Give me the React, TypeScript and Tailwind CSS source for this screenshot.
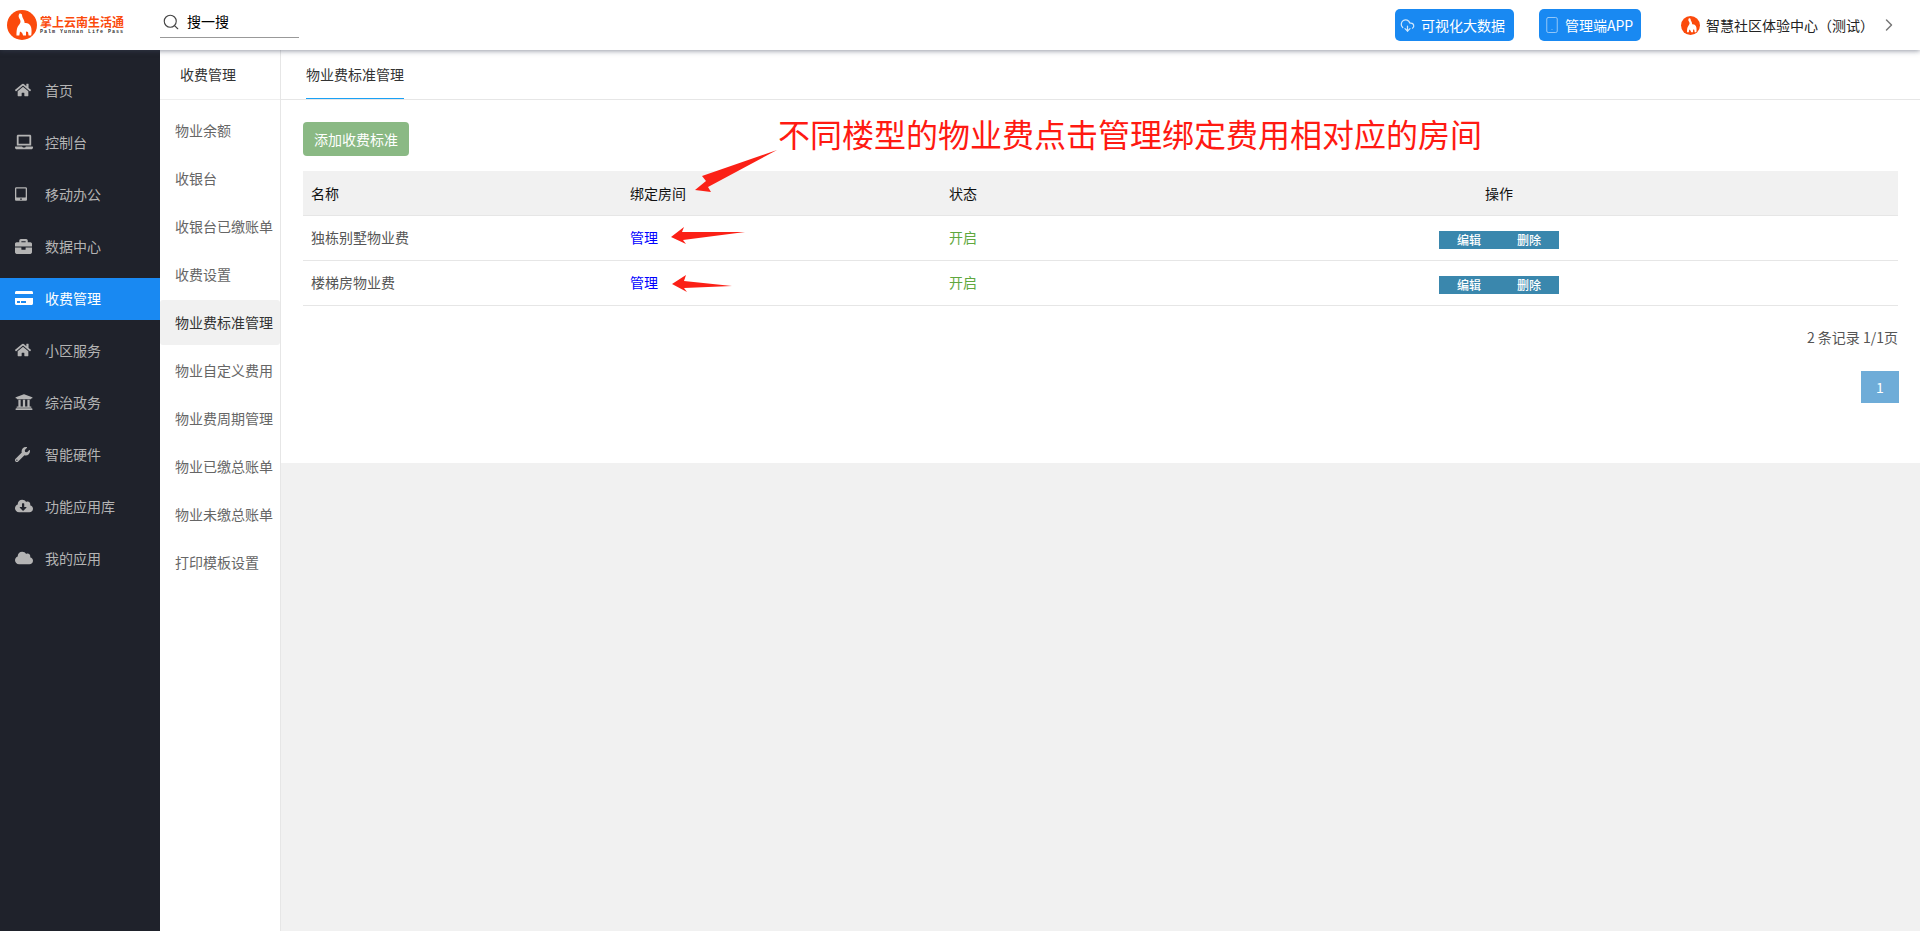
import { ReactNode } from "react"

import {
  FaBriefcase,
  FaCloud,
  FaCloudDownloadAlt,
  FaCreditCard,
  FaHome,
  FaLaptop,
  FaTabletAlt,
  FaUniversity,
  FaWrench,
} from "react-icons/fa"
import { LuChevronRight, LuCloudDownload, LuSearch, LuSmartphone } from "react-icons/lu"

const navItems: { label: string; icon: ReactNode; active?: boolean }[] = [
  { label: "首页", icon: <FaHome className="w-[16px] h-[16px]" /> },
  { label: "控制台", icon: <FaLaptop className="w-[18px] h-[18px]" /> },
  { label: "移动办公", icon: <FaTabletAlt className="w-[12px] h-[14px]" /> },
  { label: "数据中心", icon: <FaBriefcase className="w-[17px] h-[17px]" /> },
  { label: "收费管理", icon: <FaCreditCard className="w-[18px] h-[18px]" />, active: true },
  { label: "小区服务", icon: <FaHome className="w-[16px] h-[16px]" /> },
  { label: "综治政务", icon: <FaUniversity className="w-[18px] h-[18px]" /> },
  { label: "智能硬件", icon: <FaWrench className="w-[15px] h-[15px]" /> },
  { label: "功能应用库", icon: <FaCloudDownloadAlt className="w-[18px] h-[18px]" /> },
  { label: "我的应用", icon: <FaCloud className="w-[18px] h-[18px]" /> },
]

const subItems = [
  "物业余额",
  "收银台",
  "收银台已缴账单",
  "收费设置",
  "物业费标准管理",
  "物业自定义费用",
  "物业费周期管理",
  "物业已缴总账单",
  "物业未缴总账单",
  "打印模板设置",
]

const rows = ["独栋别墅物业费", "楼梯房物业费"]

const columns = "grid grid-cols-[319px_319px_319px_478px_1fr] items-center"

function Elephant({ className }: { className: string }) {
  return (
    <svg viewBox="0 0 30 30" className={className}>
      <circle cx="15" cy="15" r="15" fill="#fb4a0c" />
      <path
        d="M12.5 3.5C11 5.5 11.5 7.5 13 9.5c1 2 .5 3.5-1 5.5-2 2.2-2.5 5-2.5 10.5h2.8l.7-4 2 1.2 1.2 2.8h2.8v-4l2 .4.6 3.6h2.6c.6-3.5.6-7-.6-9.5-1.2-2.4-3.4-3.5-6-3 .3-3-2.6-5-2.6-8.5-.4-.4-1-.8-1.5-1z"
        fill="#fff"
      />
    </svg>
  )
}

function Header() {
  return (
    <header className="relative z-10 h-[50px] shrink-0 bg-white flex items-center shadow-[0_1px_5px_rgba(60,70,90,0.55)]">
      <div className="w-[160px] shrink-0 pl-[7px] flex items-center">
        <Elephant className="w-[30px] h-[30px] shrink-0" />
        <div className="ml-[3px] flex flex-col">
          <span className="text-[12px] leading-[14px] font-bold text-[#fb4a0c] whitespace-nowrap">掌上云南生活通</span>
          <span className="text-[5px] leading-[6px] tracking-[1px] text-[#333] whitespace-nowrap font-bold font-['Liberation_Mono',monospace]">
            Palm Yunnan Life Pass
          </span>
        </div>
      </div>
      <div className="self-start w-[139px] h-[38px] pt-[6px] border-b border-[#999] flex items-center">
        <LuSearch className="w-[18px] h-[18px] ml-[2px] text-[#444]" strokeWidth={1.5} />
        <span className="ml-[7px] text-[14px] text-black">搜一搜</span>
      </div>
      <div className="flex-1" />
      <button className="w-[119px] h-[32px] pl-[5px] rounded-[5px] bg-[#1989f2] text-white text-[14px] flex items-center gap-[6px]">
        <LuCloudDownload className="w-[15px] h-[15px] text-[#cfe6fb]" />
        <span>可视化大数据</span>
      </button>
      <button className="ml-[25px] w-[102px] h-[32px] pl-[4px] rounded-[5px] bg-[#1989f2] text-white text-[14px] flex items-center gap-[4px]">
        <LuSmartphone className="w-[18px] h-[18px] text-[#9ccbf8]" strokeWidth={1.25} />
        <span>管理端APP</span>
      </button>
      <Elephant className="ml-[40px] w-[19px] h-[19px]" />
      <span className="ml-[6px] text-[14px] text-[#222] whitespace-nowrap">智慧社区体验中心（测试）</span>
      <LuChevronRight className="ml-[5px] mr-[21px] w-[20px] h-[20px] text-[#777]" strokeWidth={1.75} />
    </header>
  )
}

function Sidebar() {
  return (
    <nav className="w-[160px] shrink-0 bg-[#1f222b] pt-[20px]">
      {navItems.map((item) => (
        <div
          key={item.label}
          className={
            item.active
              ? "h-[42px] mb-[10px] pb-[2px] flex items-center bg-[#1989f2] text-white"
              : "h-[42px] mb-[10px] pb-[2px] flex items-center text-[#b4b4b4]"
          }
        >
          <span className="w-[45px] pl-[15px] flex items-center shrink-0">{item.icon}</span>
          <span className="text-[14px]">{item.label}</span>
        </div>
      ))}
    </nav>
  )
}

function SubNav() {
  return (
    <aside className="w-[121px] shrink-0 bg-white border-r border-[#e6e6e6]">
      <div className="h-[50px] border-b border-[#eeeeee] pl-[20px] flex items-center text-[14px] text-[#333]">
        收费管理
      </div>
      <div className="pt-[5px]">
        {subItems.map((name, i) => (
          <div
            key={name}
            className={
              i === 4
                ? "h-[45px] mt-[3px] pl-[15px] flex items-center text-[14px] whitespace-nowrap text-[#333] bg-[#f1f1f1] rounded-[3px]"
                : "h-[45px] mt-[3px] pl-[15px] flex items-center text-[14px] whitespace-nowrap text-[#666]"
            }
          >
            {name}
          </div>
        ))}
      </div>
    </aside>
  )
}

function FeeTable() {
  return (
    <div className="mt-[15px] text-[14px]">
      <div className={`${columns} h-[45px] bg-[#f1f1f1] border-b border-[#e6e6e6] text-[#111]`}>
        <div className="pl-[8px]">名称</div>
        <div className="pl-[8px]">绑定房间</div>
        <div className="pl-[8px]">状态</div>
        <div className="text-center">操作</div>
      </div>
      {rows.map((name) => (
        <div key={name} className={`${columns} h-[45px] border-b border-[#e6e6e6] text-[#555]`}>
          <div className="pl-[8px] pb-[2px]">{name}</div>
          <div className="pl-[8px] pb-[2px] text-[#0000ff]">管理</div>
          <div className="pl-[8px] pb-[2px] text-[#5fa83e]">开启</div>
          <div className="flex justify-center pt-[3px]">
            <div className="w-[120px] h-[18px] bg-[#3a87ad] text-white text-[12px] font-medium leading-[18px] flex text-center">
              <span className="w-[60px]">编辑</span>
              <span className="w-[60px]">删除</span>
            </div>
          </div>
        </div>
      ))}
    </div>
  )
}

function Annotations() {
  return (
    <div className="absolute inset-0 pointer-events-none z-20">
      <div className="absolute left-[778px] top-[111px] text-[32px] leading-[44px] text-[#ff1a12] whitespace-nowrap">
        不同楼型的物业费点击管理绑定费用相对应的房间
      </div>
      <svg className="absolute left-0 top-0" width="1920" height="931">
        <polygon points="777,150 702,176 706,181 695,190 711,192 708,187" fill="#fb2016" />
        <polygon points="671,237 684,227 682,232 745,232 683,240 686,244" fill="#fb2016" />
        <polygon points="672,284 686,275 684,281 732,286 684,288 687,292" fill="#fb2016" />
      </svg>
    </div>
  )
}

export default function App() {
  return (
    <div className="relative w-full h-[931px] flex flex-col overflow-hidden bg-[#f1f1f1] font-['Noto_Sans_CJK_SC','Liberation_Sans',sans-serif]">
      <Header />
      <div className="flex-1 flex min-h-0">
        <Sidebar />
        <SubNav />
        <main className="flex-1 min-w-0">
          <div className="h-[413px] bg-white">
            <div className="h-[50px] border-b border-[#e6e6e6] pl-[25px] flex">
              <div className="h-[49px] border-b-[1px] border-[#1aa1f5] text-[14px] text-[#333] flex items-center">
                物业费标准管理
              </div>
            </div>
            <div className="pl-[22px] pr-[22px] pt-[22px]">
              <button className="w-[106px] h-[34px] rounded-[4px] bg-[#8ab984] text-white text-[14px]">添加收费标准</button>
              <FeeTable />
              <div className="mt-[21px] text-right text-[14px] leading-[20px] text-[#555]">2 条记录 1/1页</div>
              <div className="mt-[24px] flex justify-end">
                <div className="w-[38px] h-[32px] -mr-[1px] bg-[#6eacd8] text-white text-[14px] flex items-center justify-center">1</div>
              </div>
            </div>
          </div>
        </main>
      </div>
      <Annotations />
    </div>
  )
}
